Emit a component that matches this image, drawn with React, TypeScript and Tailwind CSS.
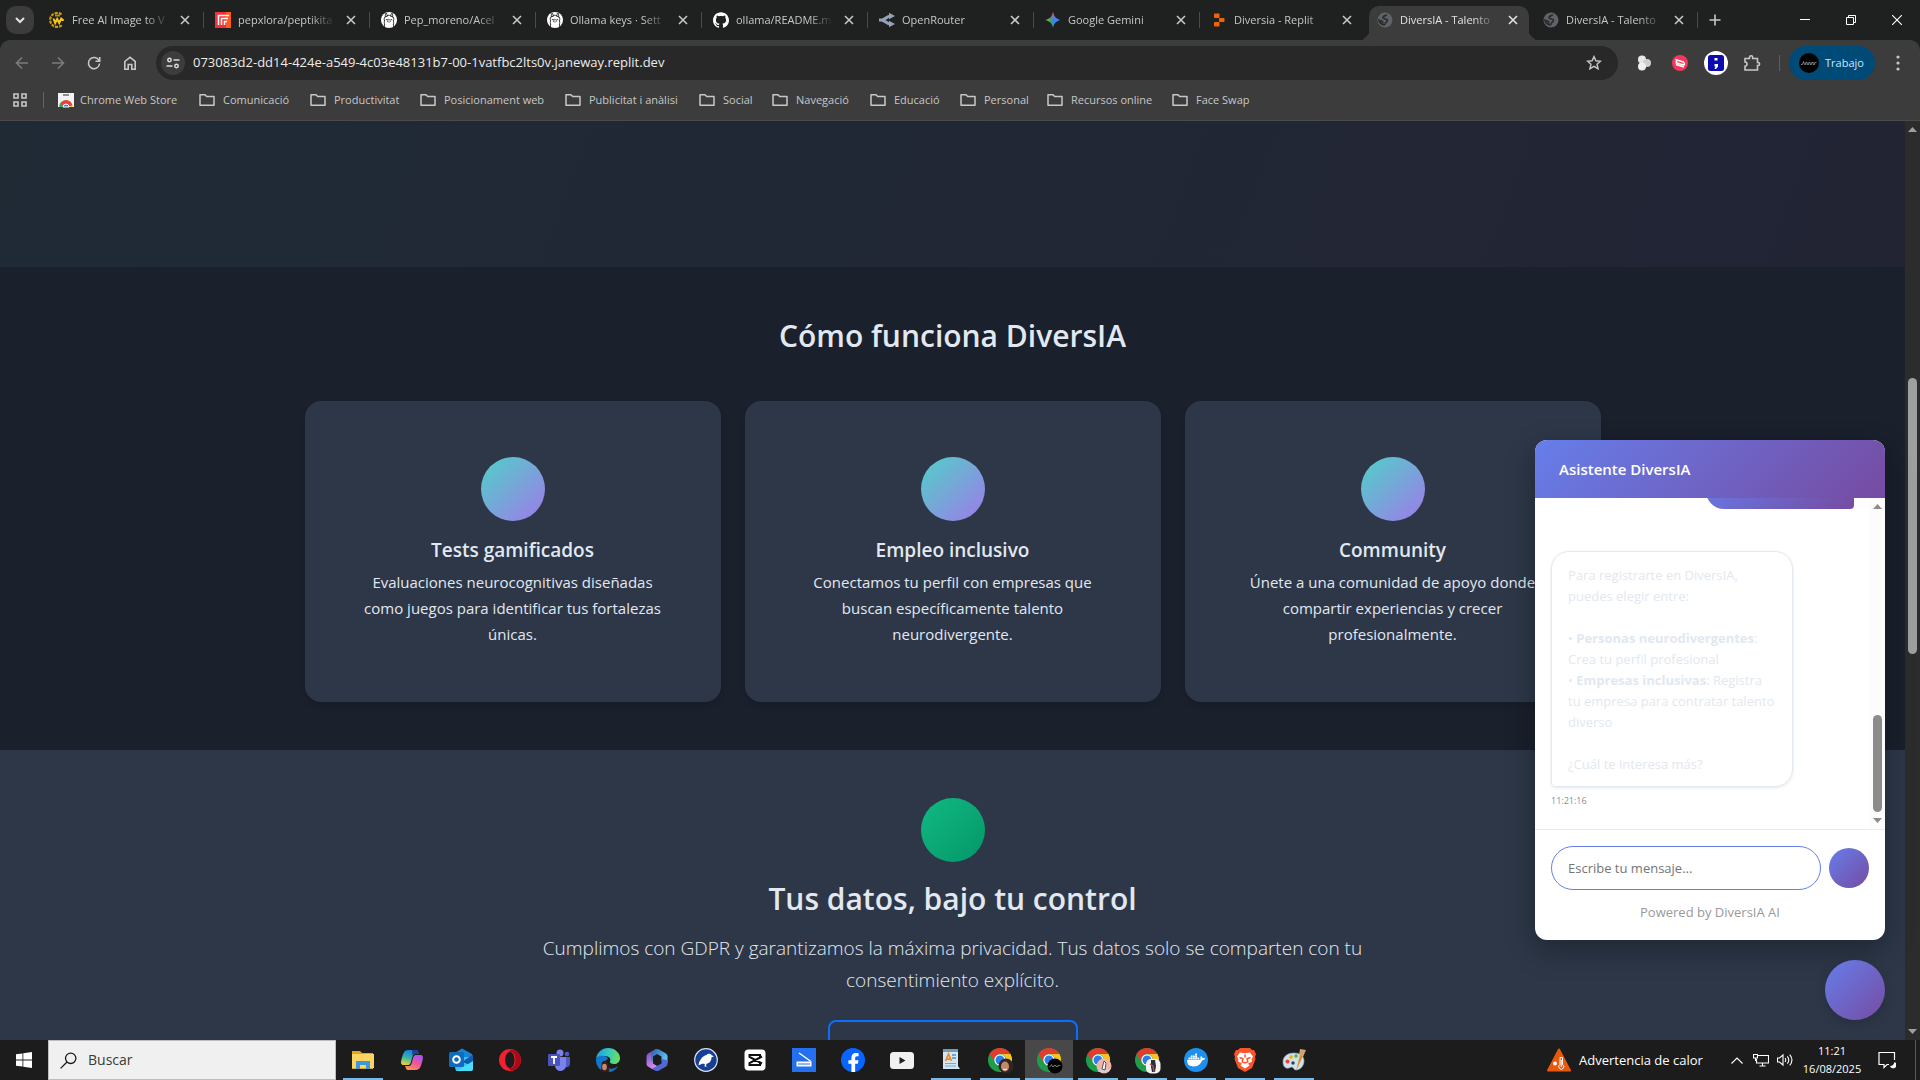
import type { ReactNode } from 'react';
import { SiOllama, SiDocker, SiGithub } from 'react-icons/si';
import { FaFacebookF } from 'react-icons/fa';

/* ---------- favicons ---------- */

const WebFavicon = () => (
  <svg viewBox="0 0 16 16" className="size-4">
    <circle cx="8" cy="8" r="7.5" fill="#5f6368" />
    <path d="M9.500 2.200C9.500 4 7 3.600 6.200 4.800 5.600 6 7 6.800 8.400 7c1.800.2 2.300 1.200 1.800 2.200-.6 1-1.700 1-1.900 2.200-.2 1-.9 1.600-1.900 1.400C3.800 12 2.200 10.200 2 8.200l3 1.200c.8.3.9 1.200.6 2" fill="none" stroke="#2a2c2e" strokeWidth="1.700" />
  </svg>
);

const VectorFavicon = () => (
  <svg viewBox="0 0 16 16" className="size-4">
    <path d="M12.500 2.500A7 7 0 1 0 13 13" fill="none" stroke="#c99a08" strokeWidth="2.200" strokeDasharray="3 1" />
    <path d="M4.500 6.500l1.700 4.500 2-4 2 4 2-4.500 2.500 2" fill="none" stroke="#f5c518" strokeWidth="2" />
    <path d="M6 3.500h5" stroke="#b98b05" strokeWidth="2" />
  </svg>
);

const RedFavicon = () => (
  <svg viewBox="0 0 16 16" className="size-4">
    <rect width="16" height="16" fill="#f0323c" />
    <path d="M11 0h5v16h-5z" fill="#ff5a1f" />
    <path d="M3.500 13V3.500H14M6.500 13V6.500H13M9.500 13V9.500H12" fill="none" stroke="#fff" strokeWidth="1.500" />
  </svg>
);

const OllamaFavicon = () => (
  <span className="flex size-4 items-center justify-center rounded-full bg-white text-[#1c1c1c]">
    <SiOllama className="size-3.5" />
  </span>
);

const GithubFavicon = () => <SiGithub className="size-4 text-white" />;

const RouterFavicon = () => (
  <svg viewBox="0 0 16 16" className="size-4" fill="none" stroke="#94a3b8" strokeWidth="3">
    <path d="M0 8h3c3 0 4.500-4 8.500-4M2 8c4 0 5.500 4 9.500 4" />
    <path d="M10 .8L16 4l-6 3.200zM10 8.800l6 3.200-6 3.200z" fill="#94a3b8" stroke="none" />
  </svg>
);

const GeminiFavicon = () => (
  <svg viewBox="0 0 16 16" className="size-4">
    <defs>
      <linearGradient id="gem" x1="0" y1="0.6" x2="1" y2="0.4">
        <stop offset="0" stopColor="#f9c515" />
        <stop offset=".35" stopColor="#34a56f" />
        <stop offset=".55" stopColor="#3b82f6" />
        <stop offset="1" stopColor="#3f86ff" />
      </linearGradient>
      <linearGradient id="gem2" x1="0" y1="0" x2="0" y2="1">
        <stop offset="0" stopColor="#ff4641" />
        <stop offset=".45" stopColor="#ff4641" stopOpacity="0" />
      </linearGradient>
    </defs>
    <path d="M8 0c.7 4.500 3.500 7.300 8 8-4.500.7-7.300 3.500-8 8-.7-4.500-3.500-7.300-8-8 4.500-.7 7.300-3.500 8-8z" fill="url(#gem)" />
    <path d="M8 0c.7 4.500 3.500 7.300 8 8-4.500.7-7.300 3.500-8 8-.7-4.500-3.500-7.300-8-8 4.500-.7 7.300-3.500 8-8z" fill="url(#gem2)" />
  </svg>
);

const ReplitFavicon = () => (
  <svg viewBox="0 0 16 16" className="size-4" fill="#f26207">
    <rect x="3" y="1.500" width="5.500" height="4.500" rx=".8" />
    <rect x="8" y="6" width="5.500" height="4" rx=".8" />
    <rect x="3" y="10" width="5.500" height="4.500" rx=".8" />
  </svg>
);

const tabs: { title: string; icon: ReactNode; active?: boolean; noLine?: boolean }[] = [
  { title: 'Free AI Image to V', icon: <VectorFavicon /> },
  { title: 'pepxlora/peptikita', icon: <RedFavicon /> },
  { title: 'Pep_moreno/Acel', icon: <OllamaFavicon /> },
  { title: 'Ollama keys · Sett', icon: <OllamaFavicon /> },
  { title: 'ollama/README.m', icon: <GithubFavicon /> },
  { title: 'OpenRouter', icon: <RouterFavicon /> },
  { title: 'Google Gemini', icon: <GeminiFavicon /> },
  { title: 'Diversia - Replit', icon: <ReplitFavicon />, noLine: true },
  { title: 'DiversIA - Talento', icon: <WebFavicon />, active: true, noLine: true },
  { title: 'DiversIA - Talento', icon: <WebFavicon /> },
];

const CloseX = () => (
  <svg viewBox="0 0 10 10" className="size-2.5" stroke="currentColor" strokeWidth="1.600">
    <path d="M1 1l8 8M9 1l-8 8" />
  </svg>
);

function TabStrip() {
  return (
    <div className="flex h-10 shrink-0 bg-[#1f2020] text-[#c7c7c7]">
      <div className="flex w-[38px] shrink-0 items-center pl-1.5">
        <button aria-label="Buscar pestañas" className="flex size-7 items-center justify-center rounded-[10px] bg-[#3c3c3c]">
          <svg viewBox="0 0 10 10" className="size-2.5" fill="none" stroke="#e3e3e3" strokeWidth="2">
            <path d="M1 3l4 4 4-4" />
          </svg>
        </button>
      </div>
      {tabs.map((t, i) => (
        <div key={i} className="relative flex w-[166px] min-w-0 items-end px-[3px]">
          {t.active && (
            <>
              <span className="absolute bottom-0 left-[-7px] size-2.5 rounded-br-[10px] bg-[#1f2020] shadow-[4px_4px_0_#3c3c3c]" />
              <span className="absolute right-[-7px] bottom-0 size-2.5 rounded-bl-[10px] bg-[#1f2020] shadow-[-4px_4px_0_#3c3c3c]" />
            </>
          )}
          <div className={t.active ? 'relative flex h-[34px] min-w-0 flex-1 items-center rounded-t-[10px] bg-[#3c3c3c] pr-2 pb-1.5 pl-2 text-[#e3e3e3]' : 'flex h-[34px] min-w-0 flex-1 items-center pr-2 pb-1.5 pl-2'}>
            <span className="shrink-0">{t.icon}</span>
            <span className="ml-[7px] min-w-0 flex-1 overflow-hidden mask-[linear-gradient(to_right,black_75%,transparent)] text-[11px] leading-4 whitespace-nowrap">{t.title}</span>
            <button aria-label="Cerrar pestaña" className="ml-2 flex size-4 shrink-0 items-center justify-center">
              <CloseX />
            </button>
          </div>
          {!t.noLine && <span className="absolute top-3 right-0 h-4 w-px bg-[#4a4b4b]" />}
        </div>
      ))}
      <button aria-label="Nueva pestaña" className="flex w-[34px] shrink-0 items-center justify-center">
        <svg viewBox="0 0 12 12" className="size-3" stroke="#c7c7c7" strokeWidth="1.600"><path d="M6 .5v11M.5 6h11" /></svg>
      </button>
      <div className="ml-auto flex shrink-0 text-white">
        <button aria-label="Minimizar" className="flex w-[46px] items-center justify-center">
          <svg viewBox="0 0 10 10" className="size-2.5" stroke="currentColor"><path d="M0 4.500h10" /></svg>
        </button>
        <button aria-label="Restaurar" className="flex w-[46px] items-center justify-center">
          <svg viewBox="0 0 10 10" className="size-2.5" stroke="currentColor" fill="none"><path d="M.5 2.500h7v7h-7zM2.500 2.500v-2h7v7h-2" /></svg>
        </button>
        <button aria-label="Cerrar" className="flex w-[46px] items-center justify-center">
          <svg viewBox="0 0 10 10" className="size-2.5" stroke="currentColor" strokeWidth="1.100"><path d="M0 0l10 10M10 0L0 10" /></svg>
        </button>
      </div>
    </div>
  );
}

/* ---------- toolbar ---------- */

function NavButton({ label, color, children }: { label: string; color?: string; children: ReactNode }) {
  return (
    <button aria-label={label} className={color ?? 'text-[#c7c7c7]'}>
      <span className="flex h-9 w-9 items-center justify-center">
        <svg viewBox="0 0 16 16" className="size-4" fill="none" stroke="currentColor" strokeWidth="1.600">{children}</svg>
      </span>
    </button>
  );
}

function Toolbar() {
  return (
    <div className="flex h-[46px] shrink-0 items-center rounded-t-[10px] bg-[#3c3c3c] pl-1">
      <NavButton label="Atrás" color="text-[#7b7b7b]"><path d="M14 8H3M8 2.500L2.500 8 8 13.500" /></NavButton>
      <NavButton label="Adelante" color="text-[#7b7b7b]"><path d="M2 8h11M8 2.500L13.500 8 8 13.500" /></NavButton>
      <NavButton label="Recargar"><path d="M13 5.500A5.600 5.600 0 1 0 13.600 8.500M13.700 2v4.200H9.500" /></NavButton>
      <NavButton label="Inicio"><path d="M2.800 6.500L8 2.300l5.200 4.200v7.700H9.800V9.500H6.200v4.700H2.800z" /></NavButton>
      <div className="ml-2 flex h-[34px] min-w-0 flex-1 items-center rounded-full bg-[#282828] pr-4 pl-[5px]">
        <button aria-label="Información del sitio" className="flex size-6 shrink-0 items-center justify-center rounded-full bg-[#3c3c3c]">
          <svg viewBox="0 0 14 14" className="size-3.5" fill="none" stroke="#dcdcdc" strokeWidth="1.500">
            <circle cx="3.500" cy="4" r="1.700" /><path d="M7.500 4h6M.5 10h6" /><circle cx="10.500" cy="10" r="1.700" />
          </svg>
        </button>
        <input aria-label="Dirección" defaultValue="073083d2-dd14-424e-a549-4c03e48131b7-00-1vatfbc2lts0v.janeway.replit.dev" className="ml-2 min-w-0 flex-1 bg-transparent text-[13px] text-[#ececec] outline-none" />
        <button aria-label="Añadir a marcadores">
          <svg viewBox="0 0 16 16" className="size-4" fill="none" stroke="#c7c7c7" strokeWidth="1.400"><path d="M8 1.600l1.900 4.200 4.600.4-3.500 3 1.100 4.500L8 11.300l-4.100 2.400L5 9.200l-3.500-3 4.600-.4z" /></svg>
        </button>
      </div>
      <div className="flex items-center pl-2">
        <button aria-label="Extensión gris" className="flex w-9 justify-center">
          <svg viewBox="0 0 16 16" className="size-4"><circle cx="6" cy="4.500" r="4" fill="#e8e8e8" /><circle cx="11" cy="8" r="4" fill="#cfcfcf" /><circle cx="6" cy="11.500" r="4" fill="#f0f0f0" /></svg>
        </button>
        <button aria-label="Extensión roja" className="flex w-9 justify-center">
          <svg viewBox="0 0 16 16" className="size-4"><circle cx="8" cy="8" r="8" fill="#f5375b" /><path d="M3.500 4.500L12 7.200M3.500 7.500l9 2.800M4.500 4.800v2.800M4 9.500l8 2.500M12.300 7.500v2.500" stroke="#fff" strokeWidth="1.500" /></svg>
        </button>
        <button aria-label="Extensión azul" className="flex w-9 justify-center">
          <svg viewBox="0 0 24 24" className="size-6"><circle cx="12" cy="12" r="12" fill="#fff" /><rect x="4" y="4" width="16" height="16" rx="2.500" fill="#0c0cae" /><path d="M10.500 7h3v2.500h-3zM10.500 13h3.500v2.500l-2 2.500h-1.500l1-2.500h-1z" fill="#fff" /></svg>
        </button>
        <button aria-label="Extensiones" className="flex w-9 justify-center">
          <svg viewBox="0 0 18 18" className="size-[18px]" fill="none" stroke="#c7c7c7" strokeWidth="1.600"><path d="M2 4.500h4.500V3.300a1.600 1.600 0 0 1 3.200 0v1.200H14.500v4h.6a1.500 1.500 0 0 1 0 3h-.6v4.500H2v-3.800c2.700-.2 2.700-4 0-4.200z" /></svg>
        </button>
      </div>
      <span className="mx-[9px] h-4 w-px bg-[#5e5e5e]" />
      <button className="flex h-[34px] w-[86px] items-center gap-1.5 rounded-full bg-[#004a77] pl-2.5 text-[11px] text-[#c2e7ff]">
        <svg viewBox="0 0 20 20" className="size-5"><circle cx="10" cy="10" r="10" fill="#000" /><path d="M2 11.500h1.500l1-3 1 3h1.200v-2h1.500v2h1.500v-2h1.500v2h1.500v-2h1.500v2h1.500v-2h1.800" fill="none" stroke="#999" strokeWidth=".8" /></svg>
        Trabajo
      </button>
      <button aria-label="Menú" className="mr-1.5 ml-[7px] flex w-8 justify-center">
        <svg viewBox="0 0 4 16" className="h-4 w-1" fill="#c7c7c7"><circle cx="2" cy="2" r="1.600" /><circle cx="2" cy="8" r="1.600" /><circle cx="2" cy="14" r="1.600" /></svg>
      </button>
    </div>
  );
}

/* ---------- bookmarks ---------- */

const Folder = () => (
  <svg viewBox="0 0 16 14" className="h-3.5 w-4 shrink-0" fill="none" stroke="#c7c7c7" strokeWidth="1.500"><path d="M1 12.300V1.700h5l1.700 1.900H15v8.700H1z" strokeLinejoin="round" /></svg>
);

const bookmarks = [
  { name: 'Comunicació', w: 'w-[111px]' },
  { name: 'Productivitat', w: 'w-[110px]' },
  { name: 'Posicionament web', w: 'w-[145px]' },
  { name: 'Publicitat i anàlisi', w: 'w-[134px]' },
  { name: 'Social', w: 'w-[73px]' },
  { name: 'Navegació', w: 'w-[98px]' },
  { name: 'Educació', w: 'w-[90px]' },
  { name: 'Personal', w: 'w-[87px]' },
  { name: 'Recursos online', w: 'w-[125px]' },
  { name: 'Face Swap', w: 'w-[100px]' },
];

function Bookmarks() {
  return (
    <nav className="flex h-[35px] shrink-0 items-center border-b border-[#4b4b4b] bg-[#3c3c3c] pb-1.5 pl-[13px] text-[11px] text-[#c7c7c7]">
      <button aria-label="Aplicaciones">
        <svg viewBox="0 0 14 14" className="size-3.5" fill="none" stroke="#c7c7c7" strokeWidth="1.600"><path d="M1 1h4v4H1zM9 1h4v4H9zM1 9h4v4H1zM9 9h4v4H9z" /></svg>
      </button>
      <span className="mr-3.5 ml-4 h-4 w-px bg-[#666]" />
      <a href="#" className="flex w-[141px] items-center gap-1.5 whitespace-nowrap">
        <svg viewBox="0 0 16 16" className="size-4 shrink-0">
          <path d="M0 1h16v14H0z" fill="#f1f3f4" />
          <path d="M5 3h6" stroke="#5f6368" strokeWidth="1.400" />
          <path d="M1.500 15a6.500 6.500 0 0 1 13-1H8z" fill="#ea4335" />
          <path d="M1.500 15a6.500 6.500 0 0 1 1-4.500L5.500 15z" fill="#34a853" />
          <path d="M11 15l3.400-2V15z" fill="#fbbc04" />
          <path d="M5 15a3 3 0 0 1 6 0z" fill="#4285f4" stroke="#fff" />
        </svg>
        Chrome Web Store
      </a>
      {bookmarks.map((b) => (
        <a key={b.name} href="#" className={`flex items-center gap-2 whitespace-nowrap ${b.w}`}>
          <Folder />
          {b.name}
        </a>
      ))}
    </nav>
  );
}

/* ---------- scrollbars ---------- */

const Arrow = ({ down, cls }: { down?: boolean; cls?: string }) => (
  <svg viewBox="0 0 9 5" className={`h-[5px] w-[9px] ${cls ?? ''}`} fill="currentColor"><path d={down ? 'M0 0h9L4.500 5z' : 'M0 5h9L4.500 0z'} /></svg>
);

/* ---------- page ---------- */

const features = [
  { title: 'Tests gamificados', text: 'Evaluaciones neurocognitivas diseñadas como juegos para identificar tus fortalezas únicas.' },
  { title: 'Empleo inclusivo', text: 'Conectamos tu perfil con empresas que buscan específicamente talento neurodivergente.' },
  { title: 'Community', text: 'Únete a una comunidad de apoyo donde compartir experiencias y crecer profesionalmente.' },
];

function Page() {
  return (
    <main className="min-w-0 flex-1 overflow-hidden bg-[#2d3748] text-[#e2e8f0]">
      <div className="h-[146px] bg-[linear-gradient(110deg,#1f2a35,#212735_50%,#222434)]" />
      <section className="bg-[#1a202c] py-12">
        <h2 className="text-center text-[30px] leading-[42px] font-semibold">Cómo funciona DiversIA</h2>
        <div className="mx-auto mt-11 grid max-w-[1296px] grid-cols-3 gap-6">
          {features.map((f) => (
            <article key={f.title} className="rounded-2xl bg-[#2d3748] px-12 pt-14 pb-[55px] text-center shadow-[0_4px_6px_rgba(0,0,0,0.1)]">
              <div className="mx-auto size-16 rounded-full bg-[linear-gradient(135deg,#4fd1c7,#9f7aea)]" />
              <h3 className="mt-4 text-[19px] leading-[26px] font-semibold">{f.title}</h3>
              <p className="mt-1.5 text-[15px] leading-[26px]">{f.text}</p>
            </article>
          ))}
        </div>
      </section>
      <section className="py-12 text-center">
        <div className="mx-auto size-16 rounded-full bg-[linear-gradient(135deg,#10b981,#059669)]" />
        <h2 className="mt-4 text-[30px] leading-[42px] font-semibold">Tus datos, bajo tu control</h2>
        <p className="mx-auto mt-3 max-w-[840px] text-[19px] leading-8 font-light">
          Cumplimos con GDPR y garantizamos la máxima privacidad. Tus datos solo se comparten con tu consentimiento explícito.
        </p>
        <button aria-label="Política de privacidad" className="mt-6 h-12 w-[250px] rounded-lg border-2 border-[#0d6efd]" />
      </section>
    </main>
  );
}

function Chat() {
  return (
    <aside className="absolute right-[35px] bottom-5 flex flex-col items-end gap-5">
      <div className="flex h-[500px] w-[350px] flex-col overflow-hidden rounded-xl bg-white shadow-[0_10px_30px_rgba(0,0,0,0.3)]">
        <header className="flex h-[58px] shrink-0 items-center bg-[linear-gradient(135deg,#667eea,#764ba2)] px-6 text-[15px] font-semibold text-white">Asistente DiversIA</header>
        <div className="flex min-h-0 flex-1">
          <div className="flex min-w-0 flex-1 flex-col justify-end overflow-hidden px-4 pb-5">
            <div className="h-[45px] w-[148px] shrink-0 self-end rounded-[18px] rounded-br bg-[linear-gradient(135deg,#667eea,#764ba2)]" />
            <div className="mt-[42px] w-[242px] rounded-[18px] rounded-bl border border-[#e2e8f0] px-4 pt-[13px] pb-[11px] text-[13px] leading-[21px] text-[#e2e8f0] shadow-[0_1px_3px_rgba(0,0,0,0.1)]">
              Para registrarte en DiversIA,<br />puedes elegir entre:<br /><br />
              • <strong>Personas neurodivergentes</strong>:<br />Crea tu perfil profesional<br />
              • <strong>Empresas inclusivas</strong>: Registra<br />tu empresa para contratar talento<br />diverso<br /><br />¿Cuál te interesa más?
            </div>
            <time className="mt-1.5 block text-[9px] leading-4 text-[#868e96]">11:21:16</time>
          </div>
          <div className="flex w-[15px] flex-col items-center bg-[#fcfcfc] py-1.5 text-[#8b8b8b]">
            <Arrow />
            <div className="mt-auto mb-1.5 h-[97px] w-[9px] rounded-full bg-[#8b8b8b]" />
            <Arrow down />
          </div>
        </div>
        <footer className="h-[111px] shrink-0 border-t border-[#e9ecef] px-4 pt-4">
          <form className="flex items-center gap-2">
            <input aria-label="Mensaje" placeholder="Escribe tu mensaje..." className="h-11 min-w-0 flex-1 rounded-full border border-[#667eea] px-4 text-[13px] outline-none placeholder:text-[#757575]" />
            <button type="button" aria-label="Enviar" className="size-10 rounded-full bg-[linear-gradient(135deg,#667eea,#764ba2)]" />
          </form>
          <p className="mt-3 text-center text-[13px] leading-5 text-[#999]">Powered by DiversIA AI</p>
        </footer>
      </div>
      <button aria-label="Abrir asistente" className="size-[60px] rounded-full bg-[linear-gradient(135deg,#667eea,#764ba2)] shadow-[0_4px_12px_rgba(0,0,0,0.15)]" />
    </aside>
  );
}

/* ---------- taskbar icons ---------- */

const Chrome = ({ children }: { children?: ReactNode }) => (
  <svg viewBox="0 0 24 24" className="size-6 overflow-visible">
    <circle cx="12" cy="12" r="12" fill="#1e9e4a" />
    <path d="M1.600 6A12 12 0 0 1 22.400 6H12a6 6 0 0 0-5.200 9z" fill="#e33b2e" />
    <path d="M22.400 6A12 12 0 0 1 12 24l5.200-9A6 6 0 0 0 12 6z" fill="#fcc31e" />
    <circle cx="12" cy="12" r="5.700" fill="#fff" />
    <circle cx="12" cy="12" r="4.500" fill="#2f7de9" />
    {children}
  </svg>
);

const box = 'size-6';
const taskIcons: { name: string; run?: boolean; active?: boolean; icon: ReactNode }[] = [
  { name: 'Explorador de archivos', run: true, icon: (
    <svg viewBox="0 0 24 24" className={box}><path d="M1 3h8l2 2h11v16H1z" fill="#e8a317" /><path d="M1 6h22v14H1z" fill="#fcd462" /><path d="M5 21v-8h14v8h-4v-4H9v4z" fill="#3d97dc" /></svg>
  ) },
  { name: 'Copilot', icon: (
    <svg viewBox="0 0 24 24" className={box}>
      <defs>
        <linearGradient id="cpa" x1="0.5" y1="0" x2="0.2" y2="1"><stop offset="0" stopColor="#1a7fe0" /><stop offset=".5" stopColor="#2fb5a8" /><stop offset="1" stopColor="#f2d23a" /></linearGradient>
        <linearGradient id="cpb" x1="0.7" y1="0" x2="0.2" y2="1"><stop offset="0" stopColor="#a855f7" /><stop offset=".5" stopColor="#f0559a" /><stop offset="1" stopColor="#fb9a4b" /></linearGradient>
      </defs>
      <path d="M8 2h8c2 0 2 2 3 4h-4c-2 0-2.500 2-3.500 6-1 4-1.500 5-4 5H4c-3 0-3.500-2-2.500-5.500C3 6 4 2 8 2z" fill="url(#cpa)" />
      <path d="M16 22H8c-2 0-2-2-3-4h4c2 0 2.500-2 3.500-6 1-4 1.500-5 4-5H20c3 0 3.500 2 2.500 5.500C21 18 20 22 16 22z" fill="url(#cpb)" />
      <path d="M12 2h4c2 0 2 2 3 4h-4c-1 0-2 .5-2.500 2z" fill="#1d3f9e" />
    </svg>
  ) },
  { name: 'Outlook', icon: (
    <svg viewBox="0 0 24 24" className={box}><path d="M4 6l9-5.500L23 6v4H4z" fill="#1784d8" /><path d="M3 9h20l1 12q0 2-3 2H7z" fill="#35c3f3" /><path d="M13 14L24 6.500V18z" fill="#0f5cae" /><path d="M8 23l16-10v7q0 3-3 3z" fill="#4bdcf7" /><rect y="4" width="15" height="15" rx="1.500" fill="#0f6cbd" /><circle cx="7.500" cy="11.500" r="3.300" fill="none" stroke="#fff" strokeWidth="2" /></svg>
  ) },
  { name: 'Opera', icon: (
    <svg viewBox="0 0 24 24" className={box}><path fillRule="evenodd" d="M12 1a11 11 0 1 0 0 22 11 11 0 0 0 0-22zm0 3c3 0 4.500 4 4.500 8s-1.500 8-4.500 8-4.800-4-4.800-8S9 4 12 4z" fill="#f0202f" /><path d="M15.500 1.600a11 11 0 0 1 0 20.800c-2 .5-4-.4-5-2.500 5 1.500 7-3.400 7-7.900s-2-9.400-7-7.900c1-2.100 3-3 5-2.500z" fill="#a80a1a" /></svg>
  ) },
  { name: 'Teams', icon: (
    <svg viewBox="0 0 24 24" className={box}><circle cx="13" cy="5" r="3.500" fill="#7b83eb" /><circle cx="20" cy="6" r="2.300" fill="#5059c9" /><path d="M17 9h6v7q-1 4-5 3z" fill="#5059c9" /><path d="M8 9h11v8a5.500 5.500 0 0 1-11 1z" fill="#7b83eb" /><rect x="1" y="6" width="12" height="12" rx="1" fill="#4b53bc" /><path d="M4 9h6M7 9v7" stroke="#fff" strokeWidth="1.800" /></svg>
  ) },
  { name: 'Edge', icon: (
    <svg viewBox="0 0 24 24" className={box}>
      <defs><linearGradient id="edg" x1="0" y1="0.3" x2="1" y2="0.5"><stop offset="0" stopColor="#1b9de2" /><stop offset=".5" stopColor="#35c8c0" /><stop offset="1" stopColor="#6be05a" /></linearGradient></defs>
      <path d="M0 11C1 4 6 0 12 0c7 0 12 5 12 10 0 4-3 6-6 6s-4.500-1-4-3c1-1 .5-5-5-5-4 0-8 1-9 3z" fill="url(#edg)" />
      <path d="M0 12c0-3 4-5 8-4 3 .5 4 2 4 3-3 1-4 5-1 8 3 2.500 7 2.500 11-1-2 4-6 6-10 6C5 24 0 19 0 12z" fill="#1276cf" />
      <path d="M6 14q4-3 6 1l1.500 8.500q-5 2-8.500-1z" fill="#3a1d16" /><ellipse cx="8.500" cy="19" rx="2.300" ry="3.300" fill="#c98a6a" />
    </svg>
  ) },
  { name: 'Microsoft 365', icon: (
    <svg viewBox="0 0 24 24" className={box}>
      <defs>
        <linearGradient id="m1" x1="0" y1="0" x2="0.3" y2="1"><stop offset="0" stopColor="#5b4bb5" /><stop offset="1" stopColor="#d58bf0" /></linearGradient>
        <linearGradient id="m2" x1="0" y1="0" x2="1" y2="0.6"><stop offset="0" stopColor="#3556a8" /><stop offset="1" stopColor="#5cc8f5" /></linearGradient>
      </defs>
      <path d="M11 1L3 5.500Q1.500 6.500 1.500 8v8q0 1.500 1.500 2.500l5 3 5-3-5-3V8z" fill="url(#m1)" />
      <path d="M9 2q3-2 6 0l6 3.500q1.500 1 1.500 2.500v7l-6-3V8.500L12 6 8 8.500v4L6 14V5z" fill="url(#m2)" />
      <path d="M22.500 12v4q0 1.500-1.500 2.500L14 22.500q-2 1-4 0l-3-1.700 9.500-5.300V11z" fill="#5468d4" />
    </svg>
  ) },
  { name: 'Thunderbird', icon: (
    <svg viewBox="0 0 24 24" className={box}><circle cx="12" cy="12" r="11.300" fill="#173f93" stroke="#dbe4f5" strokeWidth="1.200" /><path d="M4.500 17.500C5 13 8 8 12.500 7c1-1.500 4-2 5 0l2.300 1.500-2.300.8c0 3.500-2 6-5 6.500l-.5 2 1.500.7h-3l.3-2.500C9 15.500 7 16 4.500 17.500z" fill="#fff" /></svg>
  ) },
  { name: 'CapCut', icon: (
    <svg viewBox="0 0 24 24" className={box}><rect x="1.500" y="1.500" width="21" height="21" rx="4" fill="#fff" /><path d="M17 9V7H6.500v2L19 15.500M17 15v2H6.500v-2L19 8.500" fill="none" stroke="#111" strokeWidth="2" /></svg>
  ) },
  { name: 'Escáner', icon: (
    <svg viewBox="0 0 24 24" className={box}><rect width="24" height="24" fill="#2470ee" /><path d="M7 5l12 8.500" stroke="#fff" strokeWidth="1.500" /><path d="M4.500 13.500h15v5h-15z" fill="#fff" /><path d="M6 16h12" stroke="#2470ee" /></svg>
  ) },
  { name: 'Facebook', icon: (
    <span className="flex size-6 items-end justify-center rounded-full bg-[#0866ff] text-white"><FaFacebookF className="size-[19px]" /></span>
  ) },
  { name: 'YouTube', icon: (
    <svg viewBox="0 0 24 24" className={box}><rect y="4" width="24" height="17" rx="3.500" fill="#f1f1f1" /><path d="M9.500 9v7l6-3.500z" fill="#222" /></svg>
  ) },
  { name: 'WordPad', run: true, icon: (
    <svg viewBox="0 0 24 24" className={box}><path d="M4 1h15v17l2 3H4z" fill="#d3e6f4" /><path d="M4 1h15v3H4z" fill="#7299b8" /><path d="M6.500 13L9.500 6l3 7M7.500 11h4" fill="none" stroke="#ee8c2c" strokeWidth="1.800" /><path d="M13 7h4M13 10h4" stroke="#4a90c8" strokeWidth="1.500" /><path d="M6 15.500h11M6 18h11" stroke="#86a5bd" /></svg>
  ) },
  { name: 'Chrome', run: true, icon: <Chrome><circle cx="18" cy="18" r="7.500" fill="#302722" /><ellipse cx="17" cy="18.500" rx="4" ry="5" fill="#c08a6c" /><path d="M15 21q2 1.500 4 0" stroke="#fff" /></Chrome> },
  { name: 'Chrome trabajo', run: true, active: true, icon: <Chrome><circle cx="18" cy="18" r="7.500" fill="#000" /><path d="M12.500 18.500h1l1-2 1 2h1.500v-1h2v1h2v-1h2.500" fill="none" stroke="#999" strokeWidth=".7" /></Chrome> },
  { name: 'Chrome diseño', run: true, icon: <Chrome><circle cx="18" cy="18" r="7.500" fill="#f0b5aa" /><path d="M12 22a7.500 7.500 0 0 0 12-1z" fill="#ccd3dc" /><path d="M16 21l2-8 2 2-1 7z" fill="#fff" stroke="#333" strokeWidth=".8" /></Chrome> },
  { name: 'Chrome personal', run: true, icon: <Chrome><rect x="11" y="11" width="14.500" height="14.500" rx="5" fill="#f4f4f4" /><path d="M16 12h4l1 6-1 6h-3l-1-5z" fill="#29303b" /><path d="M15 16l3 2 1 6" stroke="#c4483b" fill="none" strokeWidth="1.300" /></Chrome> },
  { name: 'Docker', run: true, icon: (
    <span className="flex size-6 items-center justify-center rounded-full bg-[#1d90ed] text-white"><SiDocker className="size-[18px]" /></span>
  ) },
  { name: 'Brave', run: true, icon: (
    <svg viewBox="0 0 24 24" className={box}><path d="M7 0h10l2 2h2l2 4-1 3 .5 2-3.500 9-7 4-7-4-3.500-9L2 9 1 6l2-4h2z" fill="#fb542b" /><path d="M7 4.500l5 .8 5-.8 3 4-1.500 3 .5 2-4 2 1.500 2-4.500 3-4.500-3 1.500-2-4-2 .5-2-1.500-3z" fill="#fff" /><path d="M6.500 9.500l3.500 1.300-.8 3 2.800 1.200 2.800-1.200-.8-3 3.500-1.300M12 6.500v3" fill="none" stroke="#fb542b" strokeWidth="1.500" /></svg>
  ) },
  { name: 'Paint', run: true, icon: (
    <svg viewBox="0 0 24 24" className={box}><path d="M1 14C1 8 6 5 12 5s10 3 10 8-4 9-8 9c-3 0-2-3-4-3s-3 2-6 1c-2-1-3-3-3-6z" fill="#cfe3ef" stroke="#8fb0c4" strokeWidth=".6" /><circle cx="5.500" cy="13.500" r="2" fill="#e8443a" /><circle cx="9" cy="9" r="2" fill="#f0b429" /><circle cx="14" cy="8" r="1.800" fill="#5cb043" /><circle cx="11" cy="15" r="1.700" fill="#303b45" /><path d="M14 23l4-16 3 1z" fill="#e48a2c" /><path d="M17 7l1-6 6 1-3 7z" fill="#cfa472" /></svg>
  ) },
];

function Taskbar() {
  return (
    <footer className="flex h-10 shrink-0 bg-[#1c1c1c] text-white">
      <button aria-label="Inicio" className="flex w-12 shrink-0 items-center justify-center">
        <svg viewBox="0 0 16 16" className="size-4" fill="#fff"><path d="M0 2.300l6.500-.9v6.100H0zM7.300 1.300L16 0v7.500H7.300zM0 8.400h6.500v6.200L0 13.700zM7.300 8.400H16V16l-8.700-1.200z" /></svg>
      </button>
      <label className="flex w-72 shrink-0 items-center border border-[#bdbdbd] bg-[#f0f0f0] pl-[11px]">
        <svg viewBox="0 0 17 17" className="size-[17px] shrink-0" fill="none" stroke="#1a1a1a" strokeWidth="1.300"><circle cx="10.700" cy="6.300" r="5.200" /><path d="M7 10L.6 16.400" /></svg>
        <input aria-label="Buscar" placeholder="Buscar" className="ml-[11px] min-w-0 flex-1 bg-transparent text-sm outline-none placeholder:text-[#3a3a3a]" />
      </label>
      <div className="ml-[3px] flex gap-px">
        {taskIcons.map((t) => (
          <button key={t.name} aria-label={t.name} className={t.active ? 'relative flex w-12 items-center justify-center bg-[#484848]' : 'relative flex w-12 items-center justify-center'}>
            {t.icon}
            {t.run && <span className={t.active ? 'absolute inset-x-0 bottom-0 h-0.5 bg-[#76b9ed]' : 'absolute inset-x-1 bottom-0 h-0.5 bg-[#76b9ed]'} />}
          </button>
        ))}
      </div>
      <div className="ml-auto flex shrink-0 items-center">
        <button className="flex items-center gap-2 text-[13px] leading-5">
          <svg viewBox="0 0 24 24" className="size-6"><path d="M12 1.500L23 22.500H1z" fill="#e8590c" stroke="#e8590c" strokeWidth="2" strokeLinejoin="round" /><circle cx="8" cy="15.500" r="2" fill="#fff" /><path d="M13 9.500h2.500v7a2.500 2.500 0 1 1-2.500 0z" fill="none" stroke="#fff" /><path d="M14.200 12v7" stroke="#fff" /></svg>
          <span className="w-[150px] text-left whitespace-nowrap">Advertencia de calor</span>
        </button>
        <button aria-label="Iconos ocultos" className="flex w-4 justify-center">
          <svg viewBox="0 0 12 7" className="h-[7px] w-3" fill="none" stroke="#fff" strokeWidth="1.200"><path d="M.5 6.500L6 1l5.500 5.500" /></svg>
        </button>
        <button aria-label="Red" className="ml-2 flex w-4 justify-center">
          <svg viewBox="0 0 16 16" className="size-4" fill="none" stroke="#fff" strokeWidth="1.100"><path d="M5 3.500h10.500v7.500H3.500V7M9.500 11v3M6.500 14h6M.5 2.500h4v3.500h-4zM2.500 6v3" /></svg>
        </button>
        <button aria-label="Volumen" className="ml-2 flex w-4 justify-center">
          <svg viewBox="0 0 16 16" className="size-4" fill="none" stroke="#fff" strokeWidth="1.100"><path d="M.5 6h2L6 3v10L2.500 10h-2zM8 6q1.500 2 0 4M10.300 4.300q3 3.700 0 7.400M12.700 2.600q4.500 5.400 0 10.800" /></svg>
        </button>
        <button className="ml-2 flex w-[62px] flex-col items-center text-[11px] leading-[18px] whitespace-nowrap"><span>11:21</span><span>16/08/2025</span></button>
        <button aria-label="Notificaciones" className="flex w-12 justify-center">
          <svg viewBox="0 0 18 18" className="size-[18px]" fill="none" stroke="#fff" strokeWidth="1.200"><path d="M11 13.500H9l-3 3v-3H1v-12h15.500V9" /><path d="M16.500 11a3.300 3.300 0 1 1-4.500 4c3 0 4-2 4.500-4z" fill="#fff" stroke="none" /></svg>
        </button>
        <span className="mr-1 ml-1 h-10 w-px bg-[#5a5a5a]" />
      </div>
    </footer>
  );
}

export default function App() {
  return (
    <div className="flex h-screen flex-col overflow-hidden bg-[#1f2020] font-['Open_Sans','Noto_Sans',sans-serif]">
      <TabStrip />
      <Toolbar />
      <Bookmarks />
      <div className="relative flex min-h-0 flex-1">
        <Page />
        <div className="flex w-[15px] shrink-0 flex-col items-center bg-[#2c2c2c] py-1.5 text-[#9f9f9f]">
          <Arrow />
          <div className="mt-[246px] h-[276px] w-[9px] rounded-full bg-[#9f9f9f]" />
          <Arrow down cls="mt-auto" />
        </div>
        <Chat />
      </div>
      <Taskbar />
    </div>
  );
}
